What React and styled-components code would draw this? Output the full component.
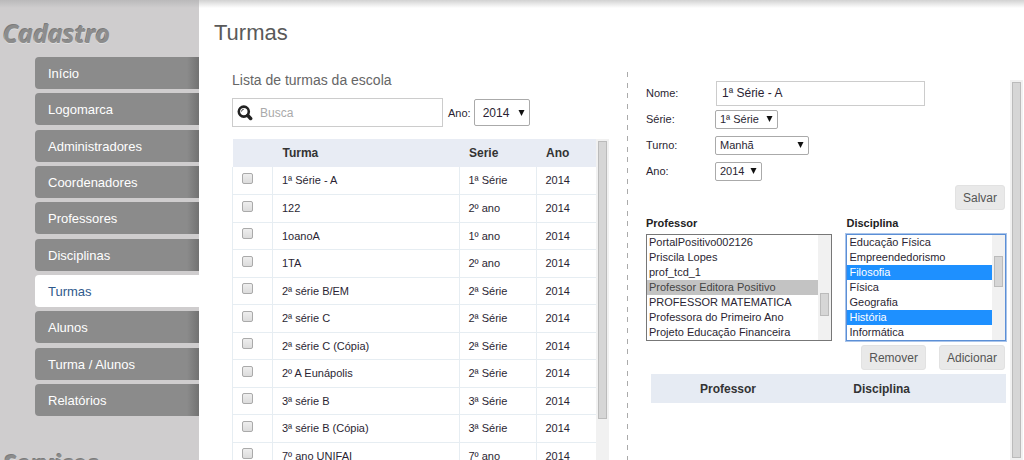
import React from 'react';
import styled, { createGlobalStyle, css } from 'styled-components';

const GlobalStyle = createGlobalStyle`
  * {
    box-sizing: border-box;
  }

  body {
    margin: 0;
    background: #fff;
    color: #2b1f33;
    font-family: 'Liberation Sans', Arial, sans-serif;
    font-size: 11px;
  }

  input, select, button {
    font-family: inherit;
    color: inherit;
  }
`;

const Page = styled.div`
  display: flex;
  height: 100vh;
  overflow: hidden;
`;

/* Sidebar */

const Sidebar = styled.aside`
  flex: 0 0 199px;
  padding-top: 16px;
  background: linear-gradient(#bab9ba, #cfcdce 8px);
`;

const SidebarTitle = styled.h2`
  margin: 0;
  padding-left: 3px;
  height: 34px;
  color: #8c8c8c;
  font-family: 'Open Sans', 'Noto Sans', sans-serif;
  font-size: 25px;
  font-style: italic;
  font-weight: 700;
  line-height: 34px;
  text-shadow: 0 1px 0 #dedede, -1px -1px 0 #7c7c7c;
`;

const Menu = styled.ul`
  display: flex;
  flex-direction: column;
  justify-content: space-between;
  min-height: 359px;
  margin: 7px 0 30px;
  padding: 0 0 0 35px;
  list-style: none;
`;

const MenuLink = styled.a`
  display: block;
  padding: 2px 0 0 13px;
  border-radius: 4px 0 0 4px;
  background: linear-gradient(to left, #727272, #8b8b8b 12px);
  color: #fff;
  font-size: 13px;
  line-height: 30px;
  text-decoration: none;

  ${props => props.$active && css`
    background: #fff;
    color: #2f5a8c;
  `}
`;

/* Content */

const Main = styled.main`
  flex: 1;
  min-width: 0;
  display: flex;
  flex-direction: column;
  background: linear-gradient(#d2d2d2, #fff 8px);
`;

const PageTitle = styled.h1`
  margin: 0;
  padding: 20px 0 0 15px;
  height: 72px;
  color: #5a5a5a;
  font-size: 22px;
  font-weight: 400;
  line-height: 26px;
`;

const Columns = styled.div`
  flex: 1;
  min-height: 0;
  display: grid;
  grid-template-columns: 13fr 12fr;
`;

const ListPanel = styled.section`
  display: flex;
  flex-direction: column;
  min-width: 0;
  min-height: 0;
  padding: 0 19px 0 33px;
  background: repeating-linear-gradient(
    #aaa 0 5px, transparent 5px 11px, #aaa 11px 16px,
    transparent 16px 21px, #aaa 21px 26px, transparent 26px 32px
  ) right top / 1px 100% no-repeat;
`;

const SectionTitle = styled.h2`
  margin: 0;
  color: #666;
  font-size: 14px;
  font-weight: 400;
  line-height: 16px;
`;

const Filters = styled.div`
  display: flex;
  align-items: center;
  margin: 10px 0 12px;
`;

const SearchBox = styled.label`
  display: flex;
  align-items: center;
  gap: 7px;
  flex: 0 1 211px;
  height: 29px;
  padding-left: 4px;
  border: 1px solid #ccc;
  background: #fff;
`;

const SearchInput = styled.input`
  flex: 1;
  min-width: 0;
  padding: 0;
  border: 0;
  background: none;
  font-size: 12px;

  &::placeholder {
    color: #aaa;
  }
`;

const FilterLabel = styled.label`
  margin: 0 3px 0 5px;
`;

const SelectWrap = styled.span`
  display: inline-grid;
  align-items: center;
  width: ${props => props.$width}px;

  > * {
    grid-area: 1 / 1;
  }

  svg {
    justify-self: end;
    margin-right: 5px;
    pointer-events: none;
  }
`;

const Dropdown = styled.select`
  appearance: none;
  width: 100%;
  height: ${props => (props.$large ? 27 : 19)}px;
  padding: 0 0 0 ${props => (props.$large ? 8 : 4)}px;
  border: 1px solid #aaa;
  border-radius: 2px;
  background: #fff;
  font-size: ${props => (props.$large ? 12 : 11)}px;
`;

const ScrollPane = styled.div`
  flex: 1;
  min-height: 0;
  display: flex;
  overflow: hidden;
`;

const Track = styled.div`
  flex: 0 0 13px;
  padding: 2px;
  background: #f1f1f1;
`;

const Thumb = styled.div`
  height: ${props => props.$size};
  margin-top: ${props => props.$offset || 0}px;
  border: 1px solid #bbb;
  background: #d6d6d6;
`;

const Table = styled.table`
  flex: 1;
  align-self: flex-start;
  table-layout: fixed;
  border-collapse: collapse;

  th {
    height: 28px;
    padding: 0 0 0 10px;
    background: #e8ecf4;
    color: #333;
    font-size: 12px;
    text-align: left;
  }

  td {
    height: 27px;
    padding: 0 0 0 9px;
    border: solid #e6edf2;
    border-width: 0 1px 1px;
  }

  tbody tr:nth-child(even) td {
    height: 28px;
  }

  td:last-child {
    border-right: 0;
  }
`;

const Col = styled.col`
  width: ${props => props.$width}px;
`;

const Checkbox = styled.input`
  appearance: none;
  display: block;
  width: 11px;
  height: 11px;
  margin: 0 0 4px;
  border: 1px solid #aaa;
  border-radius: 2px;
  background: linear-gradient(#eee, #dcdcdc);
`;

/* Form */

const FormPanel = styled.section`
  display: flex;
  min-width: 0;
  min-height: 0;
  padding: 8px 1px 0 18px;
`;

const Form = styled.form`
  flex: 1;
  min-width: 0;
  padding-right: 4px;
`;

const Fields = styled.div`
  padding-bottom: 1px;
`;

const Field = styled.div`
  display: grid;
  grid-template-columns: 69px 1fr;
  align-items: center;
  height: 26px;
`;

const TextInput = styled.input`
  width: 209px;
  max-width: 100%;
  height: 25px;
  margin-left: 1px;
  padding: 0 5px;
  border: 1px solid #ccc;
  background: #fff;
  font-size: 12px;
`;

const Actions = styled.div`
  display: flex;
  justify-content: flex-end;
  gap: 13px;
  padding-right: 1px;
`;

const Button = styled.button`
  height: 25px;
  padding: 0 7px;
  border: 1px solid #e2e2e2;
  border-radius: 3px;
  background: #e9e9e9;
  color: #555;
  font-size: 12px;
`;

const Lists = styled.div`
  display: grid;
  grid-template-columns: 187fr 160fr;
  gap: 14px;
  margin: 5px 0 4px;
`;

const ListLabel = styled.label`
  display: block;
  margin-bottom: 3px;
  color: #222;
  font-weight: 700;
  line-height: 16px;
`;

const ListFrame = styled.div`
  display: flex;
  height: 107px;
  border: 1px solid ${props => (props.$focused ? '#5b8fd6' : '#777')};
  box-shadow: ${props => (props.$focused ? '0 0 0 1px #a9c4ea' : 'none')};
`;

const ListBox = styled.select`
  flex: 1;
  min-width: 0;
  height: 105px;
  padding: 0;
  border: 0;
  outline: 0;
  background: #fff;
  font-size: 11px;
  overflow: hidden;

  option {
    height: 15px;
    min-height: 15px;
    padding: 1px 2px 0;
  }

  option:checked {
    background: ${props => (props.$focused ? 'linear-gradient(#1e90ff, #1e90ff)' : 'linear-gradient(#c3c3c3, #c3c3c3)')};
    color: ${props => (props.$focused ? '#fff' : '#444')};
  }
`;

const LinkTable = styled.table`
  width: calc(100% - 5px);
  margin: 4px 0 0 5px;
  border-collapse: collapse;

  th {
    height: 29px;
    padding: 0;
    background: #e6ebf3;
    color: #333;
    font-size: 12px;
    text-align: left;
  }

  th:first-child {
    width: 57%;
    padding-left: 49px;
  }
`;

const menuItems = [
  'Início', 'Logomarca', 'Administradores', 'Coordenadores', 'Professores',
  'Disciplinas', 'Turmas', 'Alunos', 'Turma / Alunos', 'Relatórios',
];

const classes = [
  ['1ª Série - A', '1ª Série'],
  ['122', '2º ano'],
  ['1oanoA', '1º ano'],
  ['1TA', '2º ano'],
  ['2ª série B/EM', '2ª Série'],
  ['2ª série C', '2ª Série'],
  ['2ª série C (Cópia)', '2ª Série'],
  ['2º A Eunápolis', '2ª Série'],
  ['3ª série B', '3ª Série'],
  ['3ª série B (Cópia)', '3ª Série'],
  ['7º ano UNIFAI', '7º ano'],
];

const teachers = [
  'PortalPositivo002126', 'Priscila Lopes', 'prof_tcd_1', 'Professor Editora Positivo',
  'PROFESSOR MATEMATICA', 'Professora do Primeiro Ano', 'Projeto Educação Financeira',
];

const subjects = [
  'Educação Física', 'Empreendedorismo', 'Filosofia', 'Física',
  'Geografia', 'História', 'Informática',
];

const SearchIcon = () => (
  <svg width="16" height="16" viewBox="0 0 16 16" fill="none" stroke="#222" aria-hidden="true">
    <circle cx="6.8" cy="6.6" r="5" strokeWidth="2.6" />
    <path d="M10.8 10.6 L13.6 13.4" strokeWidth="3.6" strokeLinecap="round" />
    <path d="M4.5 6.6 A2.3 2.3 0 0 1 6.8 4.3" strokeWidth="0.8" />
  </svg>
);

const Select = ({ id, width, large, options }) => (
  <SelectWrap $width={width}>
    <Dropdown id={id} $large={large}>
      {options.map(option => <option key={option}>{option}</option>)}
    </Dropdown>
    <svg width="7" height="6" viewBox="0 0 7 6" aria-hidden="true">
      <path d="M0.5 0 H6.5 L3.5 6 Z" fill="#111" />
    </svg>
  </SelectWrap>
);

const OptionList = ({ id, label, options, selected, focused, thumbSize, thumbOffset }) => (
  <div>
    <ListLabel htmlFor={id}>{label}</ListLabel>
    <ListFrame $focused={focused}>
      <ListBox id={id} multiple size={7} defaultValue={selected} $focused={focused}>
        {options.map(option => <option key={option} value={option}>{option}</option>)}
      </ListBox>
      <Track>
        <Thumb $size={thumbSize} $offset={thumbOffset} />
      </Track>
    </ListFrame>
  </div>
);

const App = () => {
  return (
    <>
      <GlobalStyle />
      <Page>
        <Sidebar>
          <SidebarTitle>Cadastro</SidebarTitle>
          <Menu>
            {menuItems.map(item => (
              <li key={item}>
                <MenuLink href="#" $active={item === 'Turmas'}>{item}</MenuLink>
              </li>
            ))}
          </Menu>
          <SidebarTitle>Serviços</SidebarTitle>
        </Sidebar>

        <Main>
          <PageTitle>Turmas</PageTitle>
          <Columns>
            <ListPanel>
              <SectionTitle>Lista de turmas da escola</SectionTitle>
              <Filters>
                <SearchBox>
                  <SearchIcon />
                  <SearchInput type="text" placeholder="Busca" aria-label="Busca" />
                </SearchBox>
                <FilterLabel htmlFor="filtro-ano">Ano:</FilterLabel>
                <Select id="filtro-ano" width={56} large options={['2014']} />
              </Filters>
              <ScrollPane>
                <Table>
                  <colgroup>
                    <Col $width={40} />
                    <col />
                    <Col $width={77} />
                    <Col $width={60} />
                  </colgroup>
                  <thead>
                    <tr>
                      <th aria-label="Selecionar" />
                      <th>Turma</th>
                      <th>Serie</th>
                      <th>Ano</th>
                    </tr>
                  </thead>
                  <tbody>
                    {classes.map(([name, grade]) => (
                      <tr key={name}>
                        <td><Checkbox type="checkbox" aria-label={name} /></td>
                        <td>{name}</td>
                        <td>{grade}</td>
                        <td>2014</td>
                      </tr>
                    ))}
                  </tbody>
                </Table>
                <Track>
                  <Thumb $size="278px" />
                </Track>
              </ScrollPane>
            </ListPanel>

            <FormPanel>
              <Form onSubmit={e => e.preventDefault()}>
                <Fields>
                  <Field>
                    <label htmlFor="nome">Nome:</label>
                    <TextInput id="nome" type="text" defaultValue="1ª Série - A" />
                  </Field>
                  <Field>
                    <label htmlFor="serie">Série:</label>
                    <Select id="serie" width={63} options={['1ª Série']} />
                  </Field>
                  <Field>
                    <label htmlFor="turno">Turno:</label>
                    <Select id="turno" width={94} options={['Manhã']} />
                  </Field>
                  <Field>
                    <label htmlFor="ano">Ano:</label>
                    <Select id="ano" width={47} options={['2014']} />
                  </Field>
                </Fields>
                <Actions>
                  <Button type="submit">Salvar</Button>
                </Actions>
                <Lists>
                  <OptionList
                    id="professor"
                    label="Professor"
                    options={teachers}
                    selected={['Professor Editora Positivo']}
                    thumbSize="23px"
                    thumbOffset={56}
                  />
                  <OptionList
                    id="disciplina"
                    label="Disciplina"
                    options={subjects}
                    selected={['Filosofia', 'História']}
                    focused
                    thumbSize="31px"
                    thumbOffset={19}
                  />
                </Lists>
                <Actions>
                  <Button type="button">Remover</Button>
                  <Button type="button">Adicionar</Button>
                </Actions>
                <LinkTable>
                  <thead>
                    <tr>
                      <th>Professor</th>
                      <th>Disciplina</th>
                    </tr>
                  </thead>
                </LinkTable>
              </Form>
              <Track>
                <Thumb $size="100%" />
              </Track>
            </FormPanel>
          </Columns>
        </Main>
      </Page>
    </>
  );
};

export default App;
